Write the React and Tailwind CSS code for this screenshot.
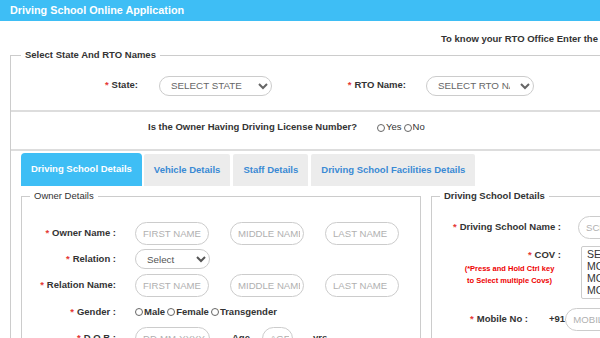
import React from 'react';

const Star = () => <span className="text-[#e53935] mr-[3px]">*</span>;

function Radio({ label }) {
  return (
    <span className="inline-flex items-center mr-[2px]">
      <span className="inline-block w-[8px] h-[8px] rounded-full border border-[#666] bg-white mr-[1px]" />
      {label}
    </span>
  );
}

function Pill({ placeholder, w = 'w-[74px]' }) {
  return (
    <input
      placeholder={placeholder}
      className={`${w} h-[23px] rounded-full border border-[#ccc] bg-white pl-[7px] pr-[3px] text-[9.6px] font-normal text-[#555] placeholder:text-[#b0b0b0] outline-none`}
    />
  );
}

export default function App() {
  const tabs = ['Driving School Details', 'Vehicle Details', 'Staff Details', 'Driving School Facilities Details'];

  return (
    <div className="w-[600px] h-[338px] overflow-hidden bg-white text-[#333]" style={{ fontFamily: '"Liberation Sans", Arial, sans-serif' }}>
      <div className="w-[1100px]">
        {/* Header */}
        <div className="h-[21px] bg-[#3ebef5] flex items-center px-[10px]">
          <h1 className="text-white font-bold text-[10.8px]">Driving School Online Application</h1>
        </div>

        <div className="h-[28px] flex items-end pb-[4px] pl-[441px] text-[9.5px] leading-[12px] font-bold">
          To know your RTO Office Enter the pincode here
        </div>

        <fieldset className="ml-[10px] border border-[#ccc] pb-[10px]">
          <legend className="ml-[10px] px-[4px] text-[9.5px] leading-[12px] font-bold">Select State And RTO Names</legend>

          {/* State / RTO */}
          <div className="flex items-center h-[49px] text-[9.5px] font-bold">
            <label className="w-[127px] text-right"><Star />State:</label>
            <select className="ml-[21px] w-[113px] h-[20px] rounded-full border border-[#ccc] bg-white px-[7px] text-[9.8px] font-normal text-[#666]">
              <option>SELECT STATE</option>
            </select>
            <label className="w-[134px] text-right"><Star />RTO Name:</label>
            <select className="ml-[20px] w-[108px] h-[20px] rounded-full border border-[#ccc] bg-white px-[7px] text-[9.8px] font-normal text-[#666]">
              <option>SELECT RTO NAME</option>
            </select>
          </div>

          <div className="h-[2px] bg-[#ddd]" />

          {/* License question */}
          <div className="h-[37px] pb-[6px] flex items-center pl-[137px] text-[9.5px] font-bold">
            <span>Is the Owner Having Driving License Number?</span>
            <span className="ml-[20px] font-normal flex items-center">
              <Radio label="Yes" />
              <Radio label="No" />
            </span>
          </div>

          <div className="h-[2px] bg-[#ddd]" />

          {/* Tabs */}
          <div className="mt-[2px] ml-[10px] flex items-end gap-[3px] text-[9.5px] font-bold">
            {tabs.map((t, i) => (
              <div
                key={t}
                className={
                  i === 0
                    ? 'h-[33px] px-[10px] -mr-[1px] flex items-center rounded-t-[4px] bg-[#3ebef5] text-white'
                    : 'h-[32px] px-[10px] flex items-center rounded-t-[2px] bg-[#ececec] text-[#3a8ad4]'
                }
              >
                {t}
              </div>
            ))}
          </div>

          <div className="ml-[10px] mt-[4px] flex gap-[10px]">
            {/* Owner Details */}
            <fieldset className="w-[400px] border border-[#ccc] pt-[20px] pb-[10px]">
              <legend className="ml-[8px] px-[4px] text-[9.5px] leading-[12px]">Owner Details</legend>
              <div className="flex flex-col gap-[2px] text-[9.5px] font-bold">
                <div className="flex items-center h-[23px]">
                  <label className="w-[94px] text-right"><Star />Owner Name :</label>
                  <div className="ml-[19px] flex gap-[21px]">
                    <Pill placeholder="FIRST NAME" />
                    <Pill placeholder="MIDDLE NAME" />
                    <Pill placeholder="LAST NAME" />
                  </div>
                </div>
                <div className="flex items-center h-[24px]">
                  <label className="w-[94px] text-right"><Star />Relation :</label>
                  <select className="ml-[19px] w-[75px] h-[20px] rounded-full border border-[#ccc] bg-white px-[7px] text-[9.8px] font-normal text-[#555]">
                    <option>Select</option>
                  </select>
                </div>
                <div className="flex items-center h-[24px]">
                  <label className="w-[94px] text-right"><Star />Relation Name:</label>
                  <div className="ml-[19px] flex gap-[21px]">
                    <Pill placeholder="FIRST NAME" />
                    <Pill placeholder="MIDDLE NAME" />
                    <Pill placeholder="LAST NAME" />
                  </div>
                </div>
                <div className="flex items-center h-[26px]">
                  <label className="w-[94px] text-right"><Star />Gender :</label>
                  <div className="ml-[19px] flex items-center">
                    <Radio label="Male" />
                    <Radio label="Female" />
                    <Radio label="Transgender" />
                  </div>
                </div>
                <div className="flex items-center h-[23px]">
                  <label className="w-[94px] text-right"><Star />D.O.B :</label>
                  <div className="ml-[19px] flex items-center">
                    <Pill placeholder="DD-MM-YYYY" w="w-[75px]" />
                    <span className="ml-[22px]">Age</span>
                    <Pill placeholder="AGE" w="ml-[12px] w-[31px]" />
                    <span className="ml-[20px]">yrs</span>
                  </div>
                </div>
              </div>
            </fieldset>

            {/* Driving School Details */}
            <fieldset className="w-[400px] border border-[#ccc] pt-[14px] pb-[10px]">
              <legend className="ml-[8px] px-[4px] text-[9.5px] leading-[12px] font-bold">Driving School Details</legend>
              <div className="flex flex-col text-[9.5px] font-bold">
                <div className="flex items-center h-[23px]">
                  <label className="w-[129px] text-right"><Star />Driving School Name :</label>
                  <Pill placeholder="SCHOOL NAME" w="ml-[17px] w-[120px]" />
                </div>
                <div className="flex mt-[7px]">
                  <div className="w-[151px] flex flex-col items-center">
                    <label className="self-end mr-[22px] mt-[3px] leading-[12px]"><Star />COV :</label>
                    <p className="mt-[2px] text-center text-[7.5px] leading-[12px] text-[#e00] ml-[4px]">
                      (*Press and Hold Ctrl key<br />to Select multiple Covs)
                    </p>
                  </div>
                  <div className="-ml-[2px] w-[120px] h-[53px] overflow-hidden border border-[#ccc] rounded-[2px] px-[5px] pt-[1px] text-[10.5px] font-normal leading-[12px] text-[#333]">
                    <div>SELECT COV</div>
                    <div>MCWOG</div>
                    <div>MCWG</div>
                    <div>MC EX50CC</div>
                    <div>LMV</div>
                  </div>
                </div>
                <div className="flex items-center h-[23px] mt-[9px]">
                  <label className="w-[96px] text-right"><Star />Mobile No :</label>
                  <span className="ml-[21px]">+91-</span>
                  <Pill placeholder="MOBILE NUMBER" w="-ml-[3px] w-[120px]" />
                </div>
              </div>
            </fieldset>
          </div>
        </fieldset>
      </div>
    </div>
  );
}
